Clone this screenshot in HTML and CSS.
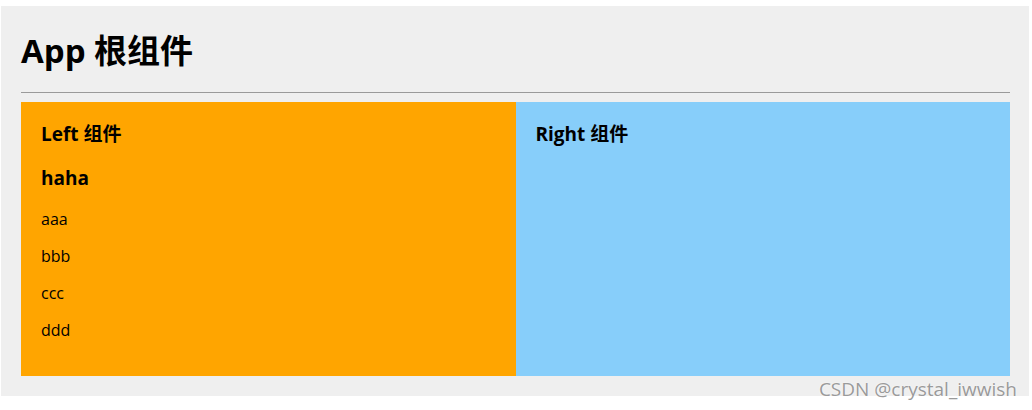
FILE: index.html
```html
<!DOCTYPE html>
<html lang="zh-CN">
<head>
  <meta charset="UTF-8">
  <meta name="viewport" content="width=device-width, initial-scale=1.0">
  <title>App 根组件</title>
  <link rel="stylesheet" href="styles.css">
</head>
<body>

  <div class="app-container">
    <h1>App 根组件</h1>
    <hr>
    <div class="box">
      <div class="left-container">
        <h3>Left 组件</h3>
        <h3>haha</h3>
        <p>aaa</p>
        <p>bbb</p>
        <p>ccc</p>
        <p>ddd</p>
      </div>
      <div class="right-container">
        <h3>Right 组件</h3>
      </div>
    </div>
  </div>

  <div class="mark">CSDN @crystal_iwwish</div>

</body>
</html>
```

FILE: styles.css
```css
body {
  margin: 0;
  font-family: "Open Sans", "Noto Sans CJK SC", sans-serif;
  color: #000;
  background-color: #fff;
  position: relative;
  height: 410px;
}

.app-container {
  margin: 6px 3px 0 1px;
  padding: 1px 19px 20px 20px;
  background-color: #efefef;
}

h1 {
  font-size: 33px;
  font-weight: 700;
  margin: 22px 0 19px;
  line-height: 44px;
}

hr {
  margin: 0;
  border: none;
  border-top: 1px solid #9a9a9a;
}

.box {
  display: flex;
  margin-top: 9px;
}

.left-container,
.right-container {
  flex: 1;
  padding: 1px 20px 19px;
}

.left-container {
  background-color: orange;
}

.right-container {
  background-color: lightskyblue;
}

h3 {
  font-size: 19px;
  font-weight: 700;
  margin: 18px 0 17px;
  line-height: 26px;
}

p {
  font-size: 16px;
  margin: 16px 0;
  line-height: 21px;
}

h3 + p {
  margin-top: 18px;
}

.mark {
  position: absolute;
  right: 15px;
  top: 376px;
  font-family: "Open Sans", sans-serif;
  font-size: 19px;
  color: #9a9a9a;
  text-shadow: 0 0 2px #fff;
}
```
